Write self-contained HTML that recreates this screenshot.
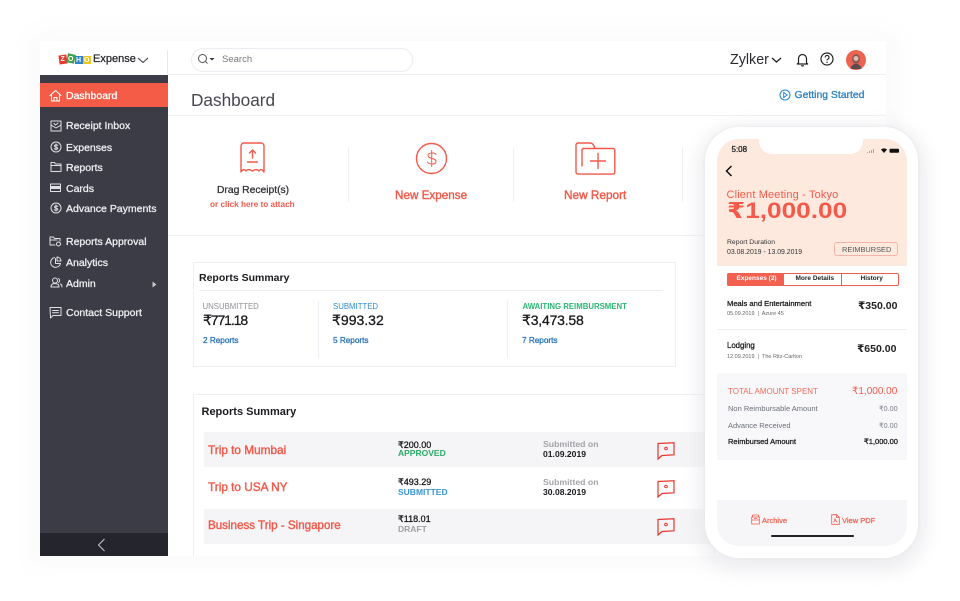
<!DOCTYPE html>
<html><head><meta charset="utf-8">
<style>
html,body{margin:0;padding:0;background:#fff}
#p{position:relative;width:960px;height:601px;overflow:hidden;background:#fff;font-family:"Liberation Sans","DejaVu Sans",sans-serif}
#p div,#p span.t{position:absolute}
.t{white-space:nowrap;line-height:1}
svg{position:absolute;overflow:visible}
.m{font-weight:normal;-webkit-text-stroke:.3px}
.n{color:#eceef0;font-size:10.5px;font-weight:normal;-webkit-text-stroke:.3px}
.r{color:#f4594a}
.k{color:#1b1b1f}
.s{stroke:#f4594a;fill:none;stroke-width:1.4;stroke-linecap:round;stroke-linejoin:round}
.w{stroke:#dfe1e4;fill:none;stroke-width:1;stroke-linecap:round;stroke-linejoin:round}
</style></head><body><div id="p">

<div style="left:30px;top:32px;width:870px;height:535px;background:#f6f6f8;filter:blur(9px);opacity:.5"></div>
<div style="left:40px;top:41px;width:846px;height:515px;background:#fff"></div>
<div style="left:40px;top:75px;width:128px;height:481px;background:#3c3c47"></div>
<div style="left:40px;top:533px;width:128px;height:23px;background:#25252d"></div>
<div style="left:40px;top:83px;width:128px;height:24px;background:#f55c47"></div>
<div style="left:168px;top:74px;width:718px;height:1px;background:#eeeef3"></div>
<div style="left:168px;top:115px;width:718px;height:1px;background:#eeeef3"></div>
<div style="left:168px;top:235px;width:540px;height:1px;background:#eeeef3"></div>
<div style="left:167px;top:50px;width:1px;height:24px;background:#e8e8ec"></div>

<!-- logo -->
<div style="left:59px;top:55px;width:8px;height:9px;background:#e8382d;transform:rotate(-8deg)"></div>
<div style="left:67px;top:54px;width:8px;height:9px;background:#3fa34d;transform:rotate(12deg)"></div>
<div style="left:75px;top:56px;width:8px;height:8px;background:#2d82c8"></div>
<div style="left:83px;top:56px;width:8px;height:8px;background:#f4c51f"></div>
<span class="t" style="left:60.5px;top:56px;font-size:7px;font-weight:bold;color:#fff">Z</span>
<span class="t" style="left:68px;top:55.5px;font-size:7px;font-weight:bold;color:#fff">O</span>
<span class="t" style="left:76px;top:56.5px;font-size:7px;font-weight:bold;color:#fff">H</span>
<span class="t" style="left:84px;top:56.5px;font-size:7px;font-weight:bold;color:#fff">O</span>
<span class="t m" style="left:93px;top:54px;font-size:11px;color:#2b2b30">Expense</span>
<svg style="left:137px;top:57px" width="12" height="7"><path d="M1 1l5 4.5L11 1" fill="none" stroke="#333" stroke-width="1"/></svg>

<!-- search -->
<div style="left:191px;top:48px;width:220px;height:22px;border:1px solid #ececf2;border-radius:12px"></div>
<svg style="left:197px;top:53px" width="20" height="12"><circle cx="5.5" cy="5.500" r="4" fill="none" stroke="#555" stroke-width="1"/><path d="M8.500 8.500l2 2" stroke="#555"/><path d="M12.500 5h5l-2.500 2.500z" fill="#333"/></svg>
<span class="t" style="left:222px;top:55px;font-size:9.500px;color:#777">Search</span>

<!-- top right -->
<span class="t" style="left:730px;top:52.500px;font-size:14.300px;color:#2b2b30">Zylker</span>
<svg style="left:771px;top:57px" width="12" height="7"><path d="M1 1l4.500 4L10 1" fill="none" stroke="#222" stroke-width="1.300"/></svg>
<svg style="left:796px;top:52px" width="13" height="15"><path d="M2.500 11V6.500a4 4 0 0 1 8 0V11l1.200 1H1.300zM5.300 13.300a1.400 1.400 0 0 0 2.400 0" fill="none" stroke="#222" stroke-width="1.200" stroke-linejoin="round"/></svg>
<svg style="left:820px;top:52px" width="14" height="14"><circle cx="7" cy="7" r="6" fill="none" stroke="#222" stroke-width="1.200"/><path d="M5.200 5.400a1.900 1.900 0 1 1 2.700 1.700c-.6.300-.9.700-.9 1.300" fill="none" stroke="#222" stroke-width="1.100"/><circle cx="7" cy="10.300" r=".7" fill="#222"/></svg>
<svg style="left:846px;top:50px" width="20" height="20"><circle cx="10" cy="10" r="10" fill="#ee6350"/><ellipse cx="10" cy="9" rx="4" ry="5" fill="#8a5a55"/><path d="M4.500 19c1-4 3-5 5.500-5s4.500 1 5.500 5" fill="#5b4a50"/><circle cx="10" cy="8.500" r="2.500" fill="#e0b8ae"/></svg>

<!-- sidebar -->
<svg style="left:49px;top:89px" width="13" height="13"><path class="w" style="stroke:#fff" d="M1 6.500L6.500 1.500l5.500 5M2.500 5.500V12h8V5.500M5 12V8.500h3V12"/></svg>
<span class="t m" style="left:66px;top:90.500px;font-size:10.500px;color:#fff">Dashboard</span>

<svg style="left:50px;top:120px" width="12" height="12"><path class="w" d="M1 1h10v10H1zM1 5l5 3 5-3M4 3.500l1.500 1.500L8 3"/></svg>
<span class="t n" style="left:66px;top:120.500px">Receipt Inbox</span>
<svg style="left:50px;top:141px" width="12" height="12"><circle class="w" cx="6" cy="6" r="5"/><path class="w" d="M7.800 4.500C7.500 3.700 4.500 3.500 4.500 5c0 1.600 3.200 .8 3.200 2.300 0 1.300-2.800 1.300-3.400.3M6 3v6"/></svg>
<span class="t n" style="left:66px;top:142.500px">Expenses</span>
<svg style="left:50px;top:161px" width="12" height="12"><path class="w" d="M1 10.500V1.500h3.500l1 1.500H11v7.500zM1 4.500h10"/></svg>
<span class="t n" style="left:66px;top:163px">Reports</span>
<svg style="left:50px;top:183px" width="12" height="10"><path class="w" d="M.5 1h10v7.500H.5z"/><path d="M1 3h9v3H1z" fill="#dfe1e4"/></svg>
<span class="t n" style="left:66px;top:184px">Cards</span>
<svg style="left:50px;top:202px" width="12" height="12"><circle class="w" cx="6" cy="6" r="5"/><path class="w" d="M7.800 4.500C7.500 3.700 4.500 3.500 4.500 5c0 1.600 3.200 .8 3.200 2.300 0 1.300-2.800 1.300-3.400.3M6 3v6"/></svg>
<span class="t n" style="left:66px;top:204px">Advance Payments</span>

<svg style="left:49px;top:235px" width="13" height="12"><path class="w" d="M1 10V2h3.500l1 1.500H11V6M1 5h7M6 10H1"/><circle class="w" cx="9.500" cy="9" r="2"/></svg>
<span class="t n" style="left:66px;top:236.500px">Reports Approval</span>
<svg style="left:50px;top:256px" width="12" height="12"><path class="w" d="M4.500 1.500A5 5 0 1 0 10.500 7.500H5.500V2.500M7 1a4 4 0 0 1 4 4H7z"/></svg>
<span class="t n" style="left:66px;top:257.500px">Analytics</span>
<svg style="left:50px;top:277px" width="13" height="11"><circle class="w" cx="5" cy="3.500" r="2.500"/><path class="w" d="M1 10c0-3 2-3.500 4-3.500S9 7 9 10zM8.500 1.500a2.300 2.300 0 0 1 0 4M10.500 7c1 .5 1.500 1.500 1.500 3"/></svg>
<span class="t n" style="left:66px;top:278.500px">Admin</span>
<svg style="left:152px;top:281px" width="6" height="7"><path d="M.5.500l4 3-4 3z" fill="#c6c8cc"/></svg>
<svg style="left:49px;top:306px" width="13" height="13"><path class="w" d="M1 1.500h11v8H4L1.500 12zM3.500 4.500h6M3.500 6.800h6"/></svg>
<span class="t n" style="left:66px;top:307.500px">Contact Support</span>
<svg style="left:97px;top:538px" width="9" height="14"><path d="M7.500 1L1.500 7l6 6" fill="none" stroke="#c9cad0" stroke-width="1"/></svg>

<!-- header -->
<span class="t" style="left:191px;top:91.500px;font-size:17.200px;color:#46464e">Dashboard</span>
<svg style="left:779px;top:89px" width="12" height="12"><circle cx="6" cy="6" r="5" fill="none" stroke="#2a8bd0" stroke-width="1.100"/><path d="M4.700 3.500l3.500 2.500-3.500 2.500z" fill="none" stroke="#2a8bd0"/></svg>
<span class="t m" style="left:794.500px;top:90.500px;font-size:10.400px;color:#2a82c4">Getting Started</span>

<!-- actions -->
<svg style="left:240px;top:142px" width="26" height="32"><path class="s" d="M1 4a3 3 0 0 1 3-3h17a3 3 0 0 1 3 3v26c-2-3-3.500-3-5-1-1.500-2-3.500-2-6.500 0-3-2-5-2-6.500 0-1.500-2-3-2-5 1z"/><path class="s" d="M12.500 16V8.500M9.500 11l3-3 3 3M7.500 20h10"/></svg>
<span class="t m" style="left:217px;top:186px;font-size:10.300px;color:#35353a">Drag Receipt(s)</span>
<span class="t" style="left:210px;top:201px;font-size:8.200px;font-weight:bold;color:#f4594a">or click here to attach</span>

<div style="left:348px;top:148px;width:1px;height:54px;background:#eeeef4"></div>
<div style="left:513px;top:148px;width:1px;height:54px;background:#eeeef4"></div>
<div style="left:682px;top:148px;width:1px;height:54px;background:#eeeef4"></div>

<svg style="left:416px;top:143px" width="31" height="31"><circle class="s" cx="15.500" cy="15.500" r="15"/><path class="s" style="stroke-width:1" d="M20 11.500c-.5-2-8-2.500-8 1 0 4 8 2 8 6 0 3.500-7.500 3-8.500 .5M15.700 7.500v16"/></svg>
<span class="t m" style="left:395px;top:190px;font-size:11.700px;color:#f4594a;-webkit-text-stroke:.4px">New Expense</span>
<svg style="left:575px;top:142px" width="41" height="33"><path class="s" d="M7 24V8a1.500 1.500 0 0 1 1.500-1.500h29.500a1.800 1.800 0 0 1 1.800 1.800v22a1.800 1.800 0 0 1-1.800 1.800H3A2 2 0 0 1 1 30V3a2 2 0 0 1 2-2h12c2 0 4 2 5 5.500"/><path class="s" d="M23 11.500v15M15.500 19h15"/></svg>
<span class="t m" style="left:564px;top:190px;font-size:11.800px;color:#f4594a;-webkit-text-stroke:.4px">New Report</span>

<!-- summary card -->
<div style="left:193px;top:262px;width:481px;height:103px;border:1px solid #eeeef4"></div>
<span class="t k" style="left:199px;top:272.500px;font-size:10.500px;font-weight:bold">Reports Summary</span>
<div style="left:199px;top:290px;width:464px;height:1px;background:#eeeef4"></div>
<div style="left:318px;top:301px;width:1px;height:57px;background:#eeeef4"></div>
<div style="left:507px;top:301px;width:1px;height:57px;background:#eeeef4"></div>
<span class="t" style="left:202.500px;top:303px;font-size:7.800px;color:#8f9095">UNSUBMITTED</span>
<span class="t k m" style="left:203px;top:313px;font-size:14px;letter-spacing:-1.100px">₹771.18</span>
<span class="t m" style="left:203px;top:336.500px;font-size:8.200px;color:#2a73b8">2 Reports</span>
<span class="t" style="left:333px;top:303px;font-size:7.800px;color:#2f8ccf">SUBMITTED</span>
<span class="t k m" style="left:332px;top:313px;font-size:14px">₹993.32</span>
<span class="t m" style="left:333px;top:336.500px;font-size:8.200px;color:#2a73b8">5 Reports</span>
<span class="t" style="left:522.500px;top:302.500px;font-size:7.800px;font-weight:bold;color:#2bb673">AWAITING REIMBURSMENT</span>
<span class="t k m" style="left:522px;top:313px;font-size:14px;letter-spacing:-.2px">₹3,473.58</span>
<span class="t m" style="left:522px;top:336.500px;font-size:8.200px;color:#2a73b8">7 Reports</span>

<!-- list card -->
<div style="left:193px;top:394px;width:520px;height:162px;border:1px solid #eeeef4;border-bottom:0"></div>
<span class="t k" style="left:201.500px;top:406.500px;font-size:11px;font-weight:bold">Reports Summary</span>
<div style="left:204px;top:432px;width:510px;height:35px;background:#f5f5f7"></div>
<div style="left:204px;top:509px;width:510px;height:35px;background:#f5f5f7"></div>

<span class="t r m" style="left:208px;top:444.500px;font-size:11.800px;-webkit-text-stroke:.4px">Trip to Mumbai</span>
<span class="t k m" style="left:398px;top:440.500px;font-size:9px">₹200.00</span>
<span class="t" style="left:398px;top:449px;font-size:8.500px;font-weight:bold;color:#2bab66">APPROVED</span>
<span class="t" style="left:543px;top:440px;font-size:8.700px;font-weight:bold;color:#a3a4a8">Submitted on</span>
<span class="t k" style="left:543px;top:449.500px;font-size:8.600px;font-weight:bold">01.09.2019</span>

<span class="t r m" style="left:208px;top:481.500px;font-size:11.800px;-webkit-text-stroke:.4px">Trip to USA NY</span>
<span class="t k m" style="left:398px;top:478px;font-size:9px">₹493.29</span>
<span class="t" style="left:398px;top:487.500px;font-size:8.500px;font-weight:bold;color:#3c96d3">SUBMITTED</span>
<span class="t" style="left:543px;top:478px;font-size:8.700px;font-weight:bold;color:#a3a4a8">Submitted on</span>
<span class="t k" style="left:543px;top:487.500px;font-size:8.600px;font-weight:bold">30.08.2019</span>

<span class="t r m" style="left:208px;top:520px;font-size:11.600px;-webkit-text-stroke:.4px">Business Trip - Singapore</span>
<span class="t k m" style="left:398px;top:515px;font-size:9px">₹118.01</span>
<span class="t" style="left:398px;top:524.500px;font-size:8.500px;font-weight:bold;color:#a0a1a5">DRAFT</span>

<svg style="left:657px;top:442px" width="18" height="18"><path d="M1 1.500L17 .8v12L5 13.500 1 17z" fill="none" stroke="#e8352d" stroke-width="1.200"/><circle cx="9" cy="6.500" r="1.300" fill="none" stroke="#e8352d"/></svg>
<svg style="left:657px;top:480px" width="18" height="18"><path d="M1 1.500L17 .8v12L5 13.500 1 17z" fill="none" stroke="#e8352d" stroke-width="1.200"/><circle cx="9" cy="6.500" r="1.300" fill="none" stroke="#e8352d"/></svg>
<svg style="left:657px;top:518px" width="18" height="18"><path d="M1 1.500L17 .8v12L5 13.500 1 17z" fill="none" stroke="#e8352d" stroke-width="1.200"/><circle cx="9" cy="6.500" r="1.300" fill="none" stroke="#e8352d"/></svg>

<!-- phone -->
<div style="left:696px;top:124px;width:232px;height:448px;border-radius:44px;background:#e6e6ea;filter:blur(8px);opacity:.6"></div>
<div style="left:705px;top:127px;width:213px;height:431px;border-radius:34px;background:#fff;box-shadow:0 0 3px #e4e4e8"></div>
<div style="left:717px;top:139px;width:190px;height:407px;border-radius:22px;background:#fff;overflow:hidden">
  <div style="left:0;top:0;width:190px;height:127px;background:#fee9df"></div>
  <div style="left:0;top:190px;width:190px;height:1px;background:#f0f0f2"></div>
  <div style="left:0;top:234px;width:190px;height:87px;background:#f8f8fa"></div>
  <div style="left:0;top:361px;width:190px;height:46px;background:#f6f6f8"></div>
</div>
<div style="left:759px;top:136px;width:104px;height:18px;background:#fff;border-radius:0 0 13px 13px"></div>
<span class="t m" style="left:731.500px;top:145.500px;font-size:8px;color:#222">5:08</span>
<svg style="left:866px;top:147px" width="34" height="7"><path d="M1 5h1v1H1zM3 4h1v2H3zM5 3h1v3H5zM7 2h1v4H7z" fill="#f08a7c"/><path d="M15 2.500c2-1.500 4-1.500 6 0L18 6z" fill="#111"/><rect x="23.500" y="1.800" width="9.500" height="4" rx="1" fill="#111"/></svg>
<svg style="left:725px;top:165px" width="8" height="12"><path d="M6.500 1L1.500 6l5 5" fill="none" stroke="#111" stroke-width="1.500"/></svg>
<span class="t" style="left:726.500px;top:190px;font-size:11px;color:#f4594a;letter-spacing:.15px">Client Meeting - Tokyo</span>
<span class="t" style="left:726.500px;top:200px;font-size:22px;font-weight:bold;color:#f4594a;transform:scaleX(1.190);transform-origin:left center">₹1,000.00</span>
<span class="t" style="left:727px;top:240px;font-size:6.800px;color:#333">Report Duration</span>
<span class="t" style="left:727px;top:250px;font-size:6.900px;color:#333">03.08.2019 - 13.09.2019</span>
<div style="left:834px;top:242px;width:62px;height:12px;border:1px solid #f6b3a6;border-radius:3px"></div>
<span class="t" style="left:842px;top:245.500px;font-size:7.400px;color:#555">REIMBURSED</span>

<div style="left:727px;top:273px;width:170px;height:11px;border:1px solid #f4594a;border-radius:2px;background:#fff"></div>
<div style="left:727px;top:273px;width:57px;height:13px;background:#f4604f;border-radius:2px 0 0 2px"></div>
<div style="left:841px;top:273px;width:1px;height:13px;background:#f4594a"></div>
<span class="t" style="left:736.500px;top:276px;font-size:6.500px;font-weight:bold;color:#fff">Expenses (2)</span>
<span class="t" style="left:795.500px;top:276px;font-size:6.500px;font-weight:bold;color:#222">More Details</span>
<span class="t" style="left:860.500px;top:276px;font-size:6.500px;font-weight:bold;color:#222">History</span>

<span class="t m" style="left:727px;top:299.500px;font-size:7.600px;color:#222">Meals and Entertainment</span>
<span class="t" style="left:727px;top:312px;font-size:5.500px;color:#666">05.09.2019 &nbsp;|&nbsp; Azure 45</span>
<span class="t" style="left:858px;top:300.500px;font-size:10.500px;font-weight:bold;color:#222">₹350.00</span>

<span class="t m" style="left:727px;top:342px;font-size:7.800px;color:#222">Lodging</span>
<span class="t" style="left:727px;top:354.500px;font-size:5.500px;color:#666">12.09.2019 &nbsp;|&nbsp; The Ritz-Carlton</span>
<span class="t" style="left:857px;top:343.500px;font-size:10.500px;font-weight:bold;color:#222">₹650.00</span>

<span class="t" style="left:728px;top:387.500px;font-size:8px;color:#f4695a">TOTAL AMOUNT SPENT</span>
<span class="t" style="left:852px;top:386.500px;font-size:10px;color:#f4594a">₹1,000.00</span>
<span class="t" style="left:728px;top:404.500px;font-size:7.500px;color:#6b6f78">Non Reimbursable Amount</span>
<span class="t" style="left:879px;top:404.500px;font-size:7.200px;color:#7b7f88">₹0.00</span>
<span class="t" style="left:728px;top:421.500px;font-size:7.500px;color:#6b6f78">Advance Received</span>
<span class="t" style="left:879px;top:421.500px;font-size:7.200px;color:#7b7f88">₹0.00</span>
<span class="t m" style="left:728px;top:437.500px;font-size:7.500px;color:#222">Reimbursed Amount</span>
<span class="t m" style="left:864px;top:437.500px;font-size:7.500px;color:#222">₹1,000.00</span>

<svg style="left:751px;top:514px" width="9" height="11"><path d="M1.500 3V1h6v2M.7 3h7.600v7H.7zM.7 6h7.600M3 4.500h3" fill="none" stroke="#f4594a" stroke-width=".8"/></svg>
<span class="t m" style="left:762px;top:517px;font-size:7.500px;color:#f4695a">Archive</span>
<svg style="left:831px;top:514px" width="9" height="11"><path d="M.7.700h5l2.600 2.600v7H.7zM5.500.700V3.500h2.800M2.500 8.500c1-1.500 1.500-3 1.500-4 .5 2 1 3 2.300 3.500" fill="none" stroke="#f4594a" stroke-width=".8"/></svg>
<span class="t m" style="left:842px;top:517px;font-size:7.500px;color:#f4695a">View PDF</span>
<div style="left:771px;top:535px;width:83px;height:2px;background:#222;border-radius:1px"></div>

</div></body></html>
